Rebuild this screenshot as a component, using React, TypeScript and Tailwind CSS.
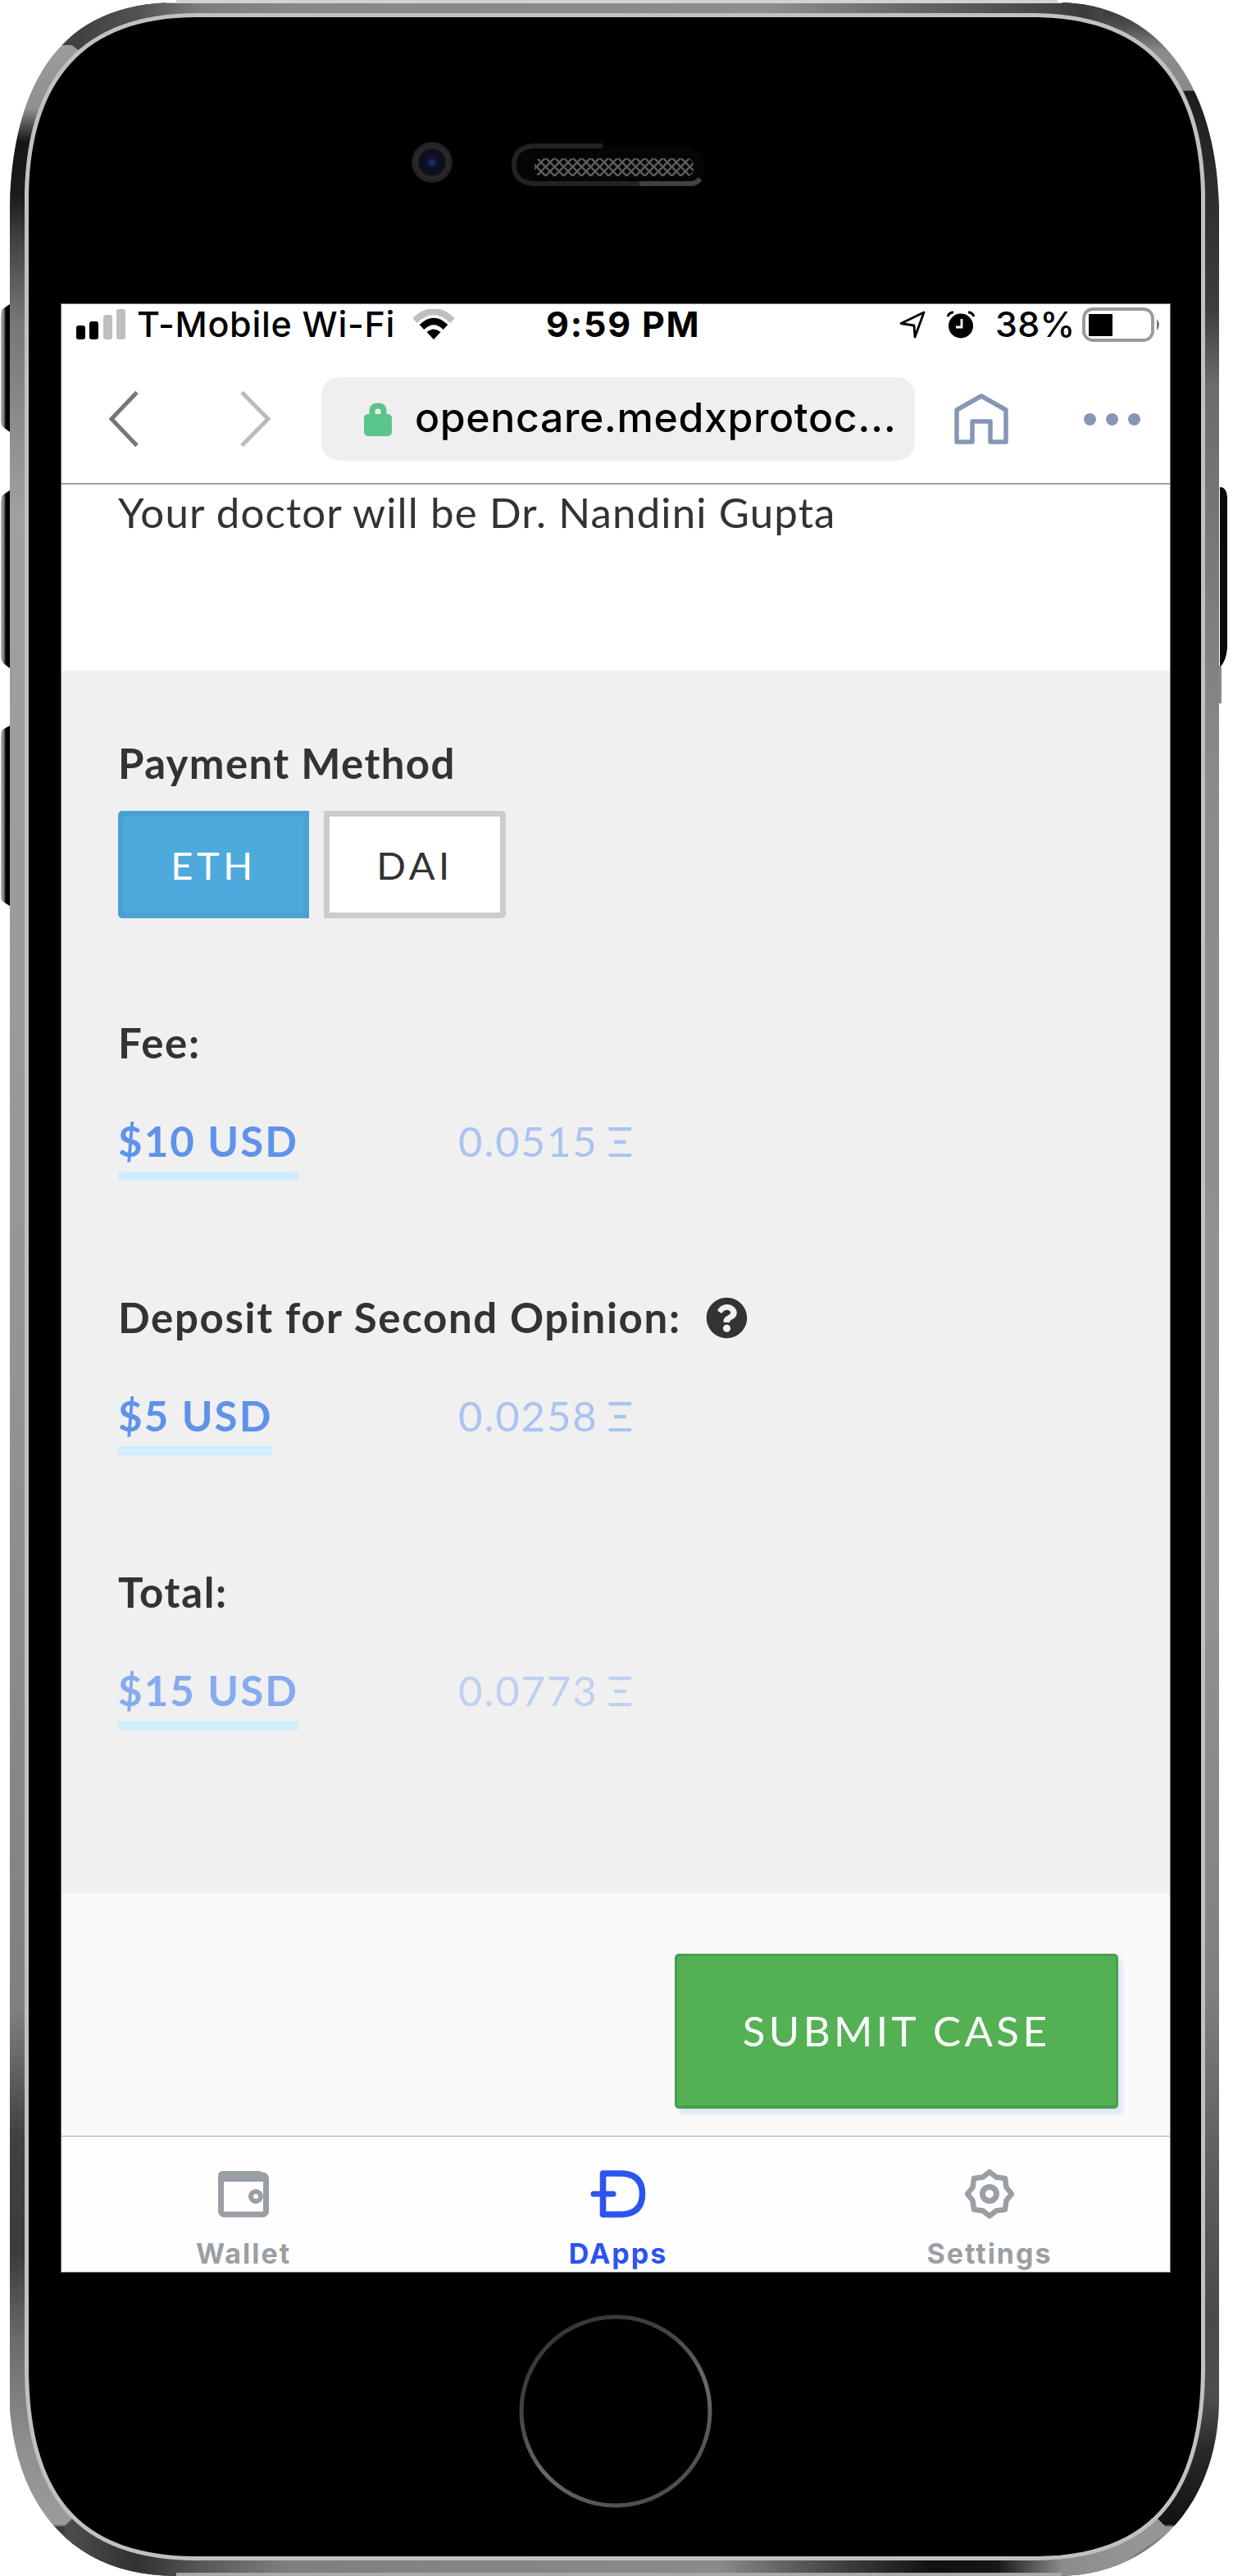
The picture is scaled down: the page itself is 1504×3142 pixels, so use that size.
import { FaQuestionCircle } from "react-icons/fa";

const OUTER =
  "M12 250C16 100 75 3 215 3V0H1290V3C1410 3 1483 100 1487 250V2930C1485 3060 1400 3142 1290 3142H215C90 3142 22 3060 12 2940Z";
const INNER =
  "M35 235C38 100 100 21 240 21H1260C1400 21 1462 100 1465 235V2890C1464 3040 1405 3118 1260 3118H240C95 3118 36 3040 35 2890Z";

type Stop = [number, string];

function Stops({ list }: { list: Stop[] }) {
  return (
    <>
      {list.map(([offset, color], i) => (
        <stop key={i} offset={offset} stopColor={color} />
      ))}
    </>
  );
}

function DeviceBody() {
  return (
    <svg className="absolute inset-0" width="1504" height="3142" viewBox="0 0 1504 3142" aria-hidden="true">
      <defs>
        <clipPath id="outer">
          <path d={OUTER} />
        </clipPath>
        <linearGradient id="left" gradientUnits="userSpaceOnUse" x1="0" x2="0" y1="0" y2="3142">
          <Stops
            list={[
              [0, "#505250"],
              [0.0175, "#404240"],
              [0.0176, "#9b9d9b"],
              [0.042, "#8e908e"],
              [0.055, "#161616"],
              [0.075, "#1a1a1a"],
              [0.095, "#454545"],
              [0.125, "#777777"],
              [0.2, "#a0a0a0"],
              [0.5, "#969696"],
              [0.78, "#808080"],
              [0.83, "#404040"],
              [0.875, "#3c3c3c"],
              [0.91, "#6d6d6d"],
              [0.95, "#8e908e"],
              [0.98, "#9b9b9b"],
              [0.981, "#3c3e3c"],
              [1, "#505250"],
            ]}
          />
        </linearGradient>
        <linearGradient id="right" gradientUnits="userSpaceOnUse" x1="0" x2="0" y1="0" y2="3142">
          <Stops
            list={[
              [0, "#303030"],
              [0.01, "#4c4c4c"],
              [0.02, "#8b8b8b"],
              [0.035, "#8a8a8a"],
              [0.0355, "#1c1e1e"],
              [0.07, "#2c2c2c"],
              [0.12, "#3e3e3e"],
              [0.15, "#6c6c6c"],
              [0.3, "#8a8a8a"],
              [0.6, "#949494"],
              [0.77, "#808080"],
              [0.84, "#5e5e5e"],
              [0.9, "#4a4a4a"],
              [0.93, "#4e4e4e"],
              [0.95, "#2a2c2a"],
              [0.98, "#101210"],
              [0.981, "#9a9a9a"],
              [0.995, "#6a6a6a"],
              [1, "#303030"],
            ]}
          />
        </linearGradient>
        <linearGradient id="top" gradientUnits="userSpaceOnUse" x1="88" x2="1400" y1="0" y2="0">
          <Stops
            list={[
              [0, "#3f413f"],
              [0.06, "#505250"],
              [0.12, "#7c7e7c"],
              [0.2, "#868886"],
              [0.65, "#8c8e8c"],
              [0.78, "#666866"],
              [0.88, "#4c4e4c"],
              [0.94, "#3a3c3a"],
              [1, "#606260"],
            ]}
          />
        </linearGradient>
        <linearGradient id="bottom" gradientUnits="userSpaceOnUse" x1="88" x2="1400" y1="0" y2="0">
          <Stops
            list={[
              [0, "#4a4c4a"],
              [0.06, "#303230"],
              [0.12, "#565856"],
              [0.2, "#7e807e"],
              [0.6, "#8a8c8a"],
              [0.72, "#3c3e3c"],
              [0.8, "#101010"],
              [0.86, "#161616"],
              [0.92, "#8c8c8c"],
              [1, "#969696"],
            ]}
          />
        </linearGradient>
        <linearGradient id="key" x1="0" x2="1" y1="0" y2="0">
          <Stops list={[[0, "#b4b4b4"], [0.35, "#7a7a7a"], [0.55, "#000000"], [1, "#000000"]]} />
        </linearGradient>
        <linearGradient id="ring" gradientUnits="userSpaceOnUse" x1="680" y1="2840" x2="800" y2="3050">
          <Stops list={[[0, "#363636"], [0.3, "#444446"], [0.6, "#6a6a6e"], [1, "#4c4c4c"]]} />
        </linearGradient>
        <radialGradient id="lens">
          <Stops list={[[0, "#27396e"], [0.25, "#0c1030"], [0.6, "#0e0e16"], [0.75, "#2c2c2c"], [1, "#1e1e1e"]]} />
        </radialGradient>
        <pattern id="mesh" width="11" height="11" patternUnits="userSpaceOnUse">
          <path d="M0 0l5.500 5.500L11 0M0 11l5.500-5.500L11 11" stroke="#5c5c5c" strokeWidth="2.400" fill="none" />
        </pattern>
      </defs>

      <path d="M12 371L3 377Q1 380 1 388V512Q1 519 4 521L12 527Z" fill="url(#key)" />
      <path d="M12 598L3 604Q1 607 1 615V800Q1 806 4 809L12 815Z" fill="url(#key)" />
      <path d="M12 885L3 890Q1 893 1 900V1092Q1 1098 4 1100L12 1105Z" fill="url(#key)" />
      <path d="M1488 594Q1496 594 1497 606V790Q1496 806 1488 814Z" fill="#0a0a0a" />
      <rect x="1486" y="812" width="4" height="46" fill="#8a8a8a" />

      <g clipPath="url(#outer)">
        <rect width="752" height="3142" fill="url(#left)" />
        <rect x="752" width="752" height="3142" fill="url(#right)" />
        <path d="M86 54L102 66L300 80H1250L1340 40L1350 0H86Z" fill="url(#top)" />
        <path d="M78 3082L94 3066L300 3080H1250L1410 3070L1426 3086L1350 3142H86Z" fill="url(#bottom)" />
        <rect x="201" width="1095" height="4" fill="#d2d2d2" />
        <rect x="215" y="3138" width="1080" height="4" fill="#a8a8a8" />
      </g>
      <path d={INNER} fill="#000" stroke="#c0c1c3" strokeWidth="10" />
      <path d={INNER} fill="#000" />

      <circle cx="527" cy="198" r="25" fill="url(#lens)" />
      <rect x="627" y="178" width="232" height="47" rx="23" fill="#050505" />
      <path d="M735 178H650Q627 180 627 201T650 224H800" stroke="#222" strokeWidth="6" fill="none" />
      <path d="M780 224H842Q850 224 854 218" stroke="#424242" strokeWidth="6" fill="none" />
      <rect x="652" y="193" width="194" height="22" rx="8" fill="url(#mesh)" />

      <circle cx="751" cy="2941" r="115" stroke="url(#ring)" strokeWidth="5" fill="none" />
    </svg>
  );
}

function StatusBar() {
  return (
    <div className="flex h-[49px] items-center font-[Inter,sans-serif] text-[43px] leading-[49px] text-black">
      <div className="ml-[18px] flex h-[37px] w-[60px] items-end justify-between">
        <span className="h-[17px] w-[11px] rounded-[3px] bg-black" />
        <span className="h-[22px] w-[11px] rounded-[3px] bg-black" />
        <span className="h-[30px] w-[11px] rounded-[3px] bg-[#bfbfbf]" />
        <span className="h-[37px] w-[11px] rounded-[3px] bg-[#bfbfbf]" />
      </div>
      <span className="ml-[14px] w-[336px] whitespace-nowrap font-medium tracking-[0.7px]">T-Mobile Wi-Fi</span>
      <svg className="shrink-0" width="52" height="37" viewBox="0 0 52 37" fill="none">
        <path d="M3 14Q26-8 49 14" stroke="#bfbfbf" strokeWidth="8" />
        <path d="M11.500 22Q26 8 40.500 22" stroke="#000" strokeWidth="8" />
        <path d="M17.500 28Q26 21 34.500 28L26 37Z" fill="#000" />
      </svg>
      <span className="ml-[111px] w-[430px] whitespace-nowrap font-bold tracking-[1.8px]">9:59 PM</span>
      <svg className="shrink-0" width="34" height="34" viewBox="0 0 34 34" fill="none">
        <path d="M31 2L3 15.500L19 18L20 32Z" stroke="#000" strokeWidth="2.800" strokeLinejoin="round" />
      </svg>
      <svg className="ml-[24px] shrink-0" width="36" height="34" viewBox="0 0 36 34">
        <circle cx="18" cy="18.500" r="15" fill="#000" />
        <path d="M2 7Q4 2 9 2M34 7Q32 2 27 2" stroke="#000" strokeWidth="3" fill="none" />
        <path d="M19 10V20H12" stroke="#fff" strokeWidth="2.800" fill="none" />
      </svg>
      <span className="ml-[24px] w-[106px] whitespace-nowrap font-medium tracking-[0.3px]">38%</span>
      <svg className="shrink-0" width="98" height="42" viewBox="0 0 98 42">
        <rect x="2" y="2" width="84" height="38" rx="11" stroke="#999" strokeWidth="3.800" fill="#fff" />
        <rect x="8" y="8" width="29" height="27" rx="1" fill="#000" />
        <path d="M91 14Q97 21 91 28Z" fill="#777" />
      </svg>
    </div>
  );
}

function BrowserBar() {
  return (
    <div className="h-[171px] border-b-2 border-[#a3a3a3] pt-[40px]">
      <div className="flex h-[102px] items-center">
        <svg className="ml-[56px]" width="40" height="70" viewBox="0 0 40 70" fill="none">
          <path d="M36 2.500L5 35L36 67.500" stroke="#777" strokeWidth="5" />
        </svg>
        <svg className="ml-[120px]" width="42" height="70" viewBox="0 0 42 70" fill="none">
          <path d="M4 2.500L36 35L4 67.500" stroke="#bbb" strokeWidth="5" />
        </svg>
        <div className="ml-[59px] flex h-[102px] w-[724px] items-center rounded-[22px] bg-[#efefef] pl-[52px]">
          <svg className="shrink-0" width="34" height="41" viewBox="0 0 34 41">
            <path d="M10 18V10Q10 4 17 4T24 10V18" stroke="#5ac58a" strokeWidth="7" fill="none" />
            <rect y="14" width="34" height="27" rx="5" fill="#5ac58a" />
          </svg>
          <span className="ml-[28px] whitespace-nowrap pb-[4px] font-[Inter,sans-serif] text-[50px] font-medium leading-[60px] tracking-[0.6px] text-black">
            opencare.medxprotoc...
          </span>
        </div>
        <svg className="ml-[47px] shrink-0" width="68" height="64" viewBox="0 0 68 64" fill="none">
          <path
            d="M4 60V21L34 4L64 21V60H45V35H23V60Z"
            stroke="#8796b3"
            strokeWidth="5.500"
            strokeLinejoin="round"
          />
        </svg>
        <div className="ml-[91px] flex gap-[12px]">
          <span className="size-[15px] rounded-full bg-[#8796b3]" />
          <span className="size-[15px] rounded-full bg-[#8796b3]" />
          <span className="size-[15px] rounded-full bg-[#8796b3]" />
        </div>
      </div>
    </div>
  );
}

interface CostProps {
  label: string;
  usd: string;
  eth: string;
  help?: boolean;
  faded?: boolean;
}

function Cost({ label, usd, eth, help, faded }: CostProps) {
  return (
    <div className="h-[335px]">
      <div className="flex h-[60px] items-center font-bold tracking-[1.65px]">
        {label}
        {help && <FaQuestionCircle className="ml-[30px] size-[51px]" />}
      </div>
      <div className="mt-[60px] flex">
        <div className="w-[415px]">
          <span
            className={
              "inline-block border-b-[11px] border-[#cfedfb] pb-[7px] font-bold tracking-[2.05px] " +
              (faded ? "text-[#86abef]" : "text-[#5f92ea]")
            }
          >
            {usd}
          </span>
        </div>
        <span
          className={
            "tracking-[1.8px] [word-spacing:-4px] " + (faded ? "text-[#bfd0f0]" : "text-[#aac3f0]")
          }
        >
          {eth} Ξ
        </span>
      </div>
    </div>
  );
}

function Tabs() {
  return (
    <nav className="flex h-[166px] justify-center overflow-hidden border-t border-[#a8a8a8] bg-[#fefefe] pl-[2px] pt-[41px] font-[Inter,sans-serif] text-[34px] font-bold leading-[40px] tracking-[2px] text-[#9a9fa6]">
      <div className="flex w-[455px] shrink-0 flex-col items-center">
        <svg width="62" height="58" viewBox="0 0 62 58" fill="none">
          <rect x="3.500" y="6" width="55" height="48" rx="4" stroke="#9a9fa6" strokeWidth="7" />
          <path d="M0 14V7Q0 1 6 1H50Q54 1 54 5V9H58V14Z" fill="#9a9fa6" />
          <circle cx="46" cy="32" r="6" stroke="#9a9fa6" strokeWidth="6" />
        </svg>
        <span className="mt-[24px]">Wallet</span>
      </div>
      <div className="flex w-[455px] shrink-0 flex-col items-center pl-[4px] text-[#2b54f0]">
        <svg width="68" height="58" viewBox="0 0 68 58" fill="none">
          <path
            d="M15.500 4H38Q63.500 5 63.500 29T38 54H15.500Z"
            stroke="#2b54f0"
            strokeWidth="7.500"
            strokeLinejoin="round"
          />
          <path d="M4 29H28" stroke="#2b54f0" strokeWidth="7" strokeLinecap="round" />
        </svg>
        <span className="mt-[24px]">DApps</span>
      </div>
      <div className="flex w-[455px] shrink-0 flex-col items-center">
        <svg className="overflow-visible" width="62" height="58" viewBox="-31 -29 62 58" fill="none">
          <path
            d="M0-27L8-20.500L19-19L20.500-8L27 0L20.500 8L19 19L8 20.500L0 27L-8 20.500L-19 19L-20.500 8L-27 0L-20.500-8L-19-19L-8-20.500Z"
            stroke="#9a9fa6"
            strokeWidth="6.500"
            strokeLinejoin="round"
          />
          <circle r="8.500" stroke="#9a9fa6" strokeWidth="7" />
        </svg>
        <span className="mt-[24px]">Settings</span>
      </div>
    </nav>
  );
}

export default function App() {
  return (
    <div className="relative flex h-[3142px] w-[1504px] overflow-hidden bg-white">
      <DeviceBody />
      <main className="relative ml-[75px] mt-[371px] flex h-[2400px] w-[1352px] flex-col bg-white font-[Lato,'Open_Sans',sans-serif] text-[51px] leading-[60px] text-[#333] shadow-[0_0_0_1px_#707070]">
        <StatusBar />
        <BrowserBar />
        <p className="h-[227px] pl-[69px] pt-[4px] tracking-[1.12px]">Your doctor will be Dr. Nandini Gupta</p>
        <section className="h-[1492px] bg-[#f0f0f0] px-[69px] pt-[83px]">
          <h2 className="font-bold tracking-[1.35px]">Payment Method</h2>
          <div className="mb-[122px] mt-[28px] flex gap-[18px] text-[47px] tracking-[4.5px]">
            <button className="h-[131px] w-[233px] rounded-l-[5px] border-[7px] border-[#4aa1d1] bg-[#4ea9dc] text-white">
              ETH
            </button>
            <button className="h-[131px] w-[222px] rounded-r-[5px] border-[7px] border-[#ccc] bg-white">DAI</button>
          </div>
          <Cost label="Fee:" usd="$10 USD" eth="0.0515" />
          <Cost label="Deposit for Second Opinion:" usd="$5 USD" eth="0.0258" help />
          <Cost label="Total:" usd="$15 USD" eth="0.0773" faded />
        </section>
        <div className="flex h-[295px] justify-end bg-[#fafafa] pr-[63px] pt-[73px]">
          <button className="h-[189px] w-[541px] rounded-[5px] border-[3px] border-b-4 border-[#4a9e4a] bg-[#53b153] tracking-[4.4px] text-white shadow-[6px_7px_4px_#dfe9f5]">
            SUBMIT CASE
          </button>
        </div>
        <Tabs />
      </main>
    </div>
  );
}
